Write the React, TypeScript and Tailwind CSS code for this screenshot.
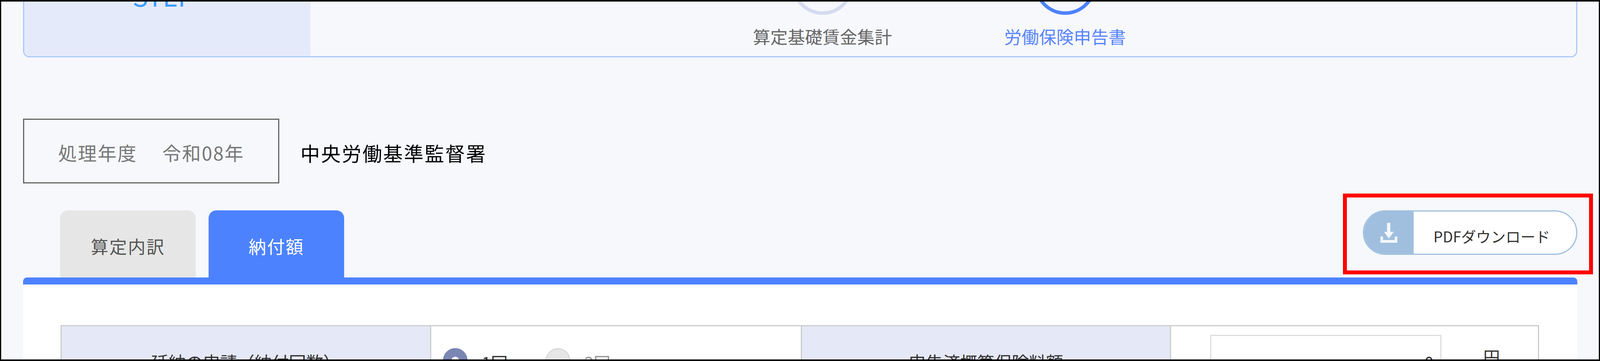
function StepItem({ label, active }: { label: string; active?: boolean }) {
  return (
    <div className="w-[621px] flex flex-col items-center">
      <div
        className={`w-[160px] h-[160px] rounded-full border-[9px] ${active ? 'border-[#4d82ff]' : 'border-[#d5daf0]'}`}
      />
      <div className={`mt-[31px] text-[44.5px] leading-[48px] ${active ? 'text-[#5a85ff]' : 'text-[#666666]'}`}>
        {label}
      </div>
    </div>
  );
}

function Radio({ label, checked }: { label: string; checked?: boolean }) {
  return (
    <label className="w-[263px] flex items-center gap-[36px]">
      <span
        className={`w-[63px] h-[63px] rounded-full flex items-center justify-center border-[3px] ${
          checked ? 'bg-[#7b86b3] border-[#7b86b3]' : 'bg-[#e6e6e6] border-[#d8d8d8]'
        }`}
      >
        {checked && <span className="w-[19px] h-[19px] rounded-full bg-white" />}
      </span>
      <span className={`mt-[8px] text-[43px] leading-[48px] ${checked ? 'text-[#333333]' : 'text-[#999999]'}`}>
        {label}
      </span>
    </label>
  );
}

export default function App() {
  return (
    <div className="w-full h-[925px] overflow-hidden border-x-[3px] border-y-[4px] border-black bg-[#f6f8fc] font-['Noto_Sans_CJK_JP',sans-serif]">
      <div className="pl-[56px] pr-[55px]">
        {/* ステップ表示 (上が切れている) */}
        <div className="-mt-[130px] h-[273px] flex border-[3px] border-[#abc8fb] rounded-[16px] overflow-hidden">
          <div className="w-[733px] bg-[#e5eafb] flex justify-center pr-[20px] pt-[76px]">
            <span className="text-[66px] leading-[71px] text-[#3c9cfc]">STEP</span>
          </div>
          <div className="flex-1 flex justify-end items-end pb-[27px] pr-[998px]">
            <StepItem label="算定基礎賃金集計" />
            <StepItem label="労働保険申告書" active />
          </div>
        </div>

        <div className="mt-[157px] flex items-center gap-[54px]">
          <div className="w-[656px] h-[166px] border-[3px] border-[#666666] flex items-center pl-[87px] pt-[6px] text-[48px] tracking-[2.6px] text-[#777777]">
            <span>処理年度</span>
            <span className="ml-[64px]">令和08年</span>
          </div>
          <div className="pt-[8px] text-[50px] tracking-[3px] text-black">中央労働基準監督署</div>
        </div>

        <div className="mt-[69px] flex justify-between items-start">
          <div className="flex gap-[33px] pl-[95px]">
            <div className="w-[347px] h-[172px] pt-[12px] rounded-t-[20px] bg-[#e6e6e6] text-[#555555] text-[45px] tracking-[2.5px] flex items-center justify-center">
              算定内訳
            </div>
            <div className="w-[347px] h-[172px] pt-[12px] rounded-t-[20px] bg-[#4d82ff] text-white text-[45px] tracking-[2.5px] flex items-center justify-center">
              納付額
            </div>
          </div>

          <div className="relative">
            <button className="w-[549px] h-[114px] flex rounded-full border-[3px] border-[#a0bfdf] bg-white overflow-hidden">
              <span className="w-[127px] h-full bg-[#a0bfdf] flex items-center justify-center">
                <svg width="43" height="51" viewBox="0 0 46 51" fill="#f4f7fb" preserveAspectRatio="none">
                  <path d="M18 0h9v23h9.5L23 40 9.5 23H18z" />
                  <path d="M0 35h7v9h32v-9h7v16H0z" />
                </svg>
              </span>
              <span className="flex-1 flex items-center justify-center pr-[16px] pt-[16px] text-[38px] text-[#333333]">
                PDFダウンロード
              </span>
            </button>
            {/* 赤枠の注釈 */}
            <div className="absolute -top-[43px] -bottom-[50px] -left-[51px] -right-[40px] border-[10px] border-[#ff0000] pointer-events-none" />
          </div>
        </div>

        <div className="border-t-[18px] border-[#4d82ff] rounded-t-[10px] bg-white pl-[96px] pr-[98px] pt-[104px] pb-[60px]">
          <div className="grid grid-cols-[946px_949px_945px_1fr] h-[189px] border-[3px] border-[#cccccc] text-[#333333]">
            <div className="bg-[#e5e8f6] border-r-[3px] border-[#cccccc] flex items-center justify-center pb-[2px] text-[44px]">
              延納の申請（納付回数）
            </div>
            <div className="border-r-[3px] border-[#cccccc] flex items-center pl-[30px] pb-[8px]">
              <Radio label="1回" checked />
              <Radio label="2回" />
            </div>
            <div className="bg-[#e5e8f6] border-r-[3px] border-[#cccccc] flex items-center justify-center pb-[2px] text-[44px]">
              申告済概算保険料額
            </div>
            <div className="flex items-center pl-[100px]">
              <div className="w-[592px] h-[140px] border-[3px] border-[#dddddd] flex items-center justify-end pr-[17px] text-[43px]">
                0
              </div>
              <span className="ml-[107px] mb-[28px] text-[43px]">円</span>
            </div>
          </div>
        </div>
      </div>
    </div>
  );
}
